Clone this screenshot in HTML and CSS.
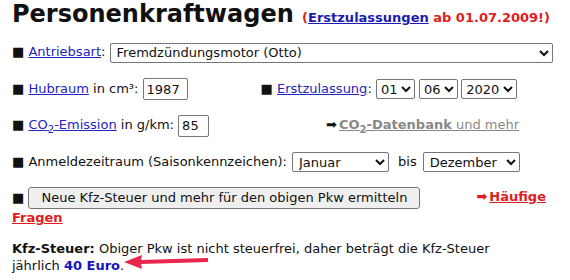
FILE: index.html
```html
<!DOCTYPE html>
<html lang="de">
<head>
<meta charset="utf-8">
<link rel="stylesheet" href="styles.css">
</head>
<body>
<div class="page">
  <h1 class="title">Personenkraftwagen <span class="sub">(<a href="#" class="sub-link">Erstzulassungen</a> ab 01.07.2009!)</span></h1>

  <div class="row row-first"><span class="sq">■</span> <a href="#" class="lnk">Antriebsart</a>: <select class="sel sel-wide"><option>Fremdzündungsmotor (Otto)</option></select></div>

  <div class="row"><span class="sq">■</span> <a href="#" class="lnk">Hubraum</a> in cm³: <input class="inp inp-hub" value="1987"><span class="right-hub"><span class="sq">■</span> <a href="#" class="lnk">Erstzulassung</a>: <select class="sel sel-small"><option>01</option></select> <select class="sel sel-small"><option>06</option></select> <select class="sel sel-year"><option>2020</option></select></span></div>

  <div class="row"><span class="sq">■</span> <a href="#" class="lnk">CO<sub>2</sub>-Emission</a> in g/km: <input class="inp inp-co2" value="85"><span class="right-co2"><span class="arr">➡</span><a href="#" class="gray-link"><b>CO<sub>2</sub>-Datenbank</b> und mehr</a></span></div>

  <div class="row"><span class="sq">■</span> Anmeldezeitraum (Saisonkennzeichen): <select class="sel sel-month"><option>Januar</option></select><span class="bis">bis</span><select class="sel sel-month2"><option>Dezember</option></select></div>

  <div class="row-btn"><span class="sq">■</span> <button class="btn">Neue Kfz-Steuer und mehr für den obigen Pkw ermitteln</button><span class="faq"><span class="red-arr">➡</span><a href="#" class="red-link">Häufige Fragen</a></span></div>

  <p class="result"><b>Kfz-Steuer:</b> Obiger Pkw ist nicht steuerfrei, daher beträgt die Kfz-Steuer jährlich <b class="euro">40 Euro</b>.</p>
</div>
<svg class="pink-arrow" width="90" height="20" viewBox="0 0 90 20">
  <polygon points="0,10 18,3 17,8 84,6 84,10 17,12 18,17" fill="#e8264e"/>
</svg>
</body>
</html>
```

FILE: styles.css
```css
html, body {
  margin: 0;
  padding: 0;
  background: #fff;
}
body {
  font-family: "DejaVu Sans", sans-serif;
  font-size: 13px;
  color: #111;
  position: relative;
  width: 570px;
  height: 280px;
  overflow: hidden;
}
.page {
  padding: 0 12px;
}
.title {
  margin: 0;
  font-size: 24px;
  font-weight: bold;
  line-height: 28px;
  height: 28px;
  color: #111;
  white-space: nowrap;
}
.sub {
  font-size: 13px;
  color: #e01c1c;
  font-weight: bold;
}
.sub-link {
  color: #1c1cb0;
}
.row {
  height: 22px;
  line-height: 22px;
  margin-top: 14.5px;
  white-space: nowrap;
}
.row-first {
  margin-top: 13px;
}
.sq {
  font-size: 13px;
}
.lnk {
  color: #2424c0;
}
sub {
  font-size: 10px;
  vertical-align: -4px;
  line-height: 0;
}
.sel {
  font-family: "DejaVu Sans", sans-serif;
  font-size: 13px;
  height: 20px;
  border: 1px solid #767676;
  border-radius: 2px;
  background: #fff;
  color: #111;
  margin: 0;
  padding: 0 0 0 2px;
  vertical-align: middle;
}
.sel-wide {
  width: 443px;
}
.sel-small { margin-right: 0; padding: 0; }
.sel-year { padding: 0; margin-left: -1px; }
.sel-month { width: 97px; margin-left: 1px; }
.sel-month2 { width: 97px; }
.bis { margin: 0 6px 0 9px; }
.inp {
  font-family: "DejaVu Sans", sans-serif;
  font-size: 13px;
  height: 22px;
  box-sizing: border-box;
  border: 1px solid #767676;
  border-radius: 2px;
  padding: 0 3px;
  margin: 0;
  color: #111;
  vertical-align: middle;
}
.inp-hub { width: 45px; }
.inp-co2 { width: 31px; }
.right-hub {
  margin-left: 73px;
}
.right-co2 {
  margin-left: 117px;
  color: #888;
}
.arr {
  color: #111;
  margin-right: 2px;
}
.gray-link {
  color: #888;
}
.row-btn {
  margin-top: 14px;
  line-height: 17px;
}
.btn {
  font-family: "DejaVu Sans", sans-serif;
  font-size: 13px;
  height: 22px;
  margin: 0;
  padding: 0 12px;
  border: 1px solid #767676;
  border-radius: 3px;
  background: #efefef;
  color: #111;
  vertical-align: middle;
}
.faq {
  margin-left: 56px;
  font-weight: bold;
}
.red-arr {
  color: #e01c1c;
  margin-right: 2px;
}
.red-link {
  color: #e01c1c;
}
.result {
  margin: 14px 0 0;
  line-height: 17px;
  width: 505px;
}
.euro {
  color: #1414c0;
}
.pink-arrow {
  position: absolute;
  left: 124px;
  top: 252px;
}
```
